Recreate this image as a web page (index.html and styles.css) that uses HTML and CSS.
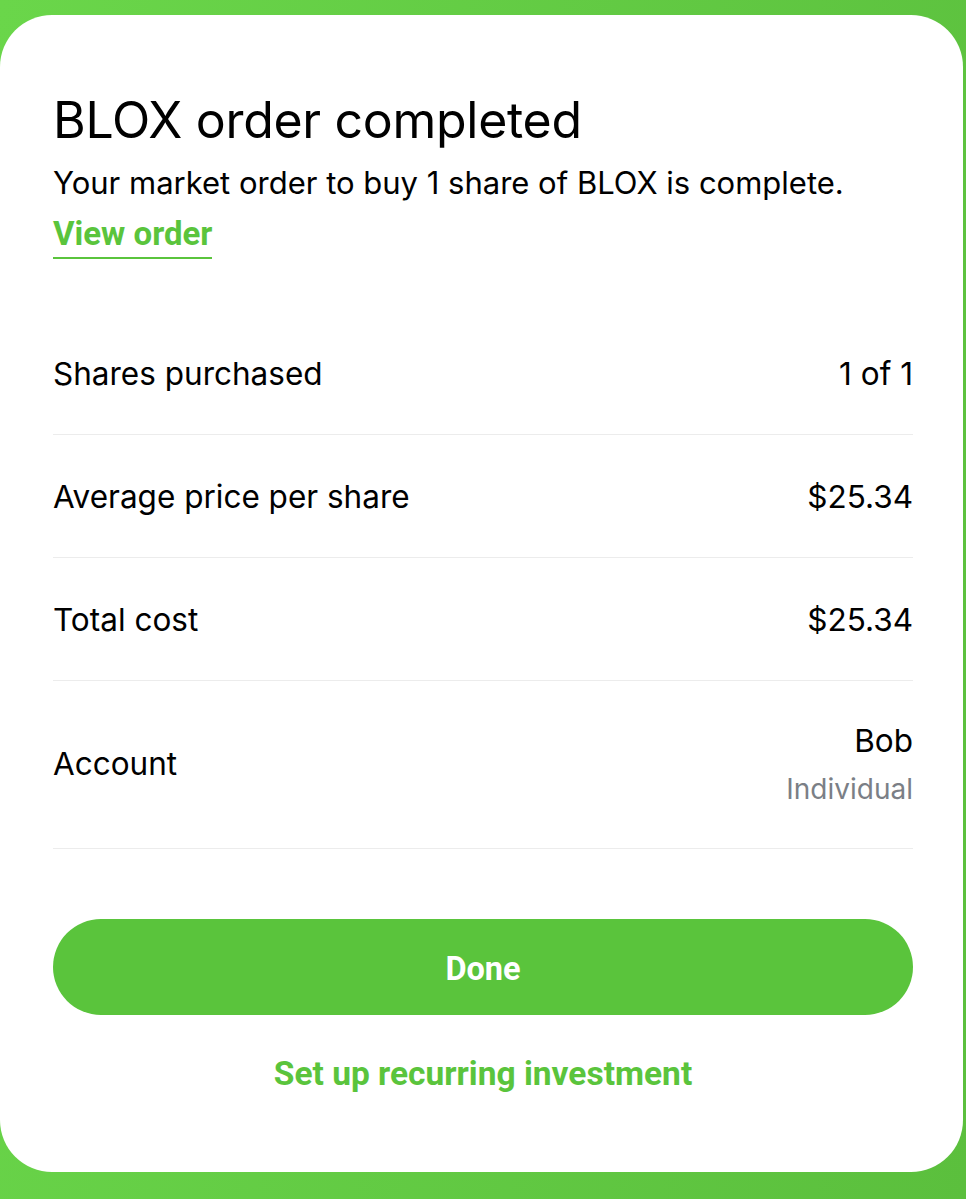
FILE: index.html
```html
<!DOCTYPE html>
<html lang="en">
<head>
    <meta charset="UTF-8">
    <meta name="viewport" content="width=device-width, initial-scale=1.0">
    <title>Order completed</title>
    <link rel="stylesheet" href="styles.css">
</head>
<body>

    <div class="sheet">
        <h1>BLOX order completed</h1>
        <p class="subtitle">Your market order to buy 1 share of BLOX is complete.</p>
        <a class="view-order" href="#">View order</a>

        <div class="details">
            <div class="row">
                <span class="label">Shares purchased</span>
                <span class="value">1 of 1</span>
            </div>
            <div class="row">
                <span class="label">Average price per share</span>
                <span class="value">$25.34</span>
            </div>
            <div class="row">
                <span class="label">Total cost</span>
                <span class="value">$25.34</span>
            </div>
            <div class="row row-tall">
                <span class="label">Account</span>
                <span class="value">
                    Bob
                    <span class="sub-value">Individual</span>
                </span>
            </div>
        </div>

        <button class="done-btn">Done</button>
        <a class="recurring" href="#">Set up recurring investment</a>
    </div>

</body>
</html>
```

FILE: styles.css
```css
* {
    box-sizing: border-box;
}
body {
    font-family: 'Inter', 'Noto Sans', sans-serif;
    background: linear-gradient(100deg, #6ad64a, #5bbf3d);
    margin: 0;
    padding: 15px 3px 27px 0;
    min-height: 1199px;
}
.sheet {
    background-color: white;
    border-radius: 52px;
    height: 1157px;
    padding: 76px 50px 0 53px;
    display: flex;
    flex-direction: column;
}
h1 {
    font-size: 50px;
    font-weight: 400;
    color: #000;
    margin: 0;
    line-height: 58px;
    letter-spacing: -0.3px;
}
.subtitle {
    font-size: 31px;
    color: #000;
    margin: 14px 0 0 0;
    line-height: 40px;
}
.view-order {
    align-self: flex-start;
    font-family: 'Roboto', sans-serif;
    font-weight: 700;
    font-size: 33px;
    color: #5ac43c;
    text-decoration: none;
    border-bottom: 2px solid #5ac43c;
    line-height: 40px;
    padding-bottom: 3px;
    margin-top: 11px;
}
.details {
    margin-top: 53px;
}
.row {
    display: flex;
    justify-content: space-between;
    align-items: center;
    height: 123px;
    border-bottom: 1px solid #ececec;
    font-size: 31.5px;
    color: #000;
}
.row-tall {
    height: 168px;
    padding-bottom: 2px;
}
.value {
    text-align: right;
    display: flex;
    flex-direction: column;
    align-items: flex-end;
}
.sub-value {
    font-size: 28px;
    color: #7b7f86;
    margin-top: 12px;
}
.done-btn {
    margin-top: 70px;
    height: 96px;
    width: 100%;
    border: none;
    border-radius: 48px;
    background-color: #5ac43c;
    color: white;
    font-family: 'Roboto', sans-serif;
    font-weight: 700;
    font-size: 32.5px;
    padding-top: 4px;
    cursor: pointer;
}
.recurring {
    align-self: center;
    margin-top: 39px;
    font-family: 'Roboto', sans-serif;
    font-weight: 700;
    font-size: 33.5px;
    color: #5ac43c;
    text-decoration: none;
}
```
